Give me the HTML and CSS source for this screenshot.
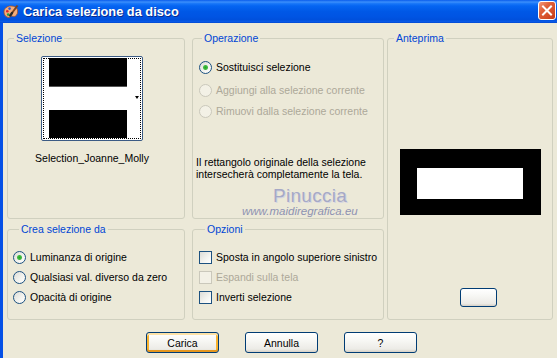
FILE: index.html
```html
<!DOCTYPE html>
<html lang="it">
<head>
    <meta charset="UTF-8">
    <title>Carica selezione da disco</title>
    <link rel="stylesheet" href="styles.css">
</head>
<body>
    <div class="window">
        <header class="titlebar">
            <svg class="app-icon" width="16" height="16" viewBox="0 0 16 16">
                <path d="M8 2C4 2 1 4.5 1 8c0 3 2 5.5 5 5.5 1.5 0 1.5-1.5 2.5-1.5S11 13 12.5 12 15 9 14.5 6 11 2 8 2z" fill="#f3ad7c" stroke="#a0522d" stroke-width=".8"/>
                <circle cx="4.3" cy="7.2" r="1.3" fill="#e02828"/>
                <circle cx="6.6" cy="4.6" r="1.3" fill="#2858e0"/>
                <circle cx="5.2" cy="10.6" r="1.3" fill="#22a040"/>
                <path d="M14.5 1.5 L9 9" stroke="#7a4420" stroke-width="2"/>
                <path d="M9 9 L7.2 11.6" stroke="#2a2a2a" stroke-width="2.4" stroke-linecap="round"/>
            </svg>
            <span class="title">Carica selezione da disco</span>
            <button class="close" aria-label="Chiudi">
                <svg width="16" height="17" viewBox="0 0 16 17">
                    <path d="M4 4.5 L12 12.5 M12 4.5 L4 12.5" stroke="#fff" stroke-width="2" stroke-linecap="square"/>
                </svg>
            </button>
        </header>

        <div class="client">
            <div class="groups">
                <fieldset class="group group-sel">
                    <legend>Selezione</legend>
                    <div class="sel-picker">
                        <div class="thumb">
                            <div class="thumb-focus">
                                <div class="thumb-img">
                                    <i class="band band-top"></i>
                                    <i class="band band-mid"></i>
                                    <i class="band band-bottom"></i>
                                </div>
                                <span class="thumb-arrow"></span>
                            </div>
                        </div>
                        <div class="sel-name">Selection_Joanne_Molly</div>
                    </div>
                </fieldset>

                <fieldset class="group group-op">
                    <legend>Operazione</legend>
                    <label class="option"><input type="radio" name="op" checked><span>Sostituisci selezione</span></label>
                    <label class="option disabled"><input type="radio" name="op" disabled><span>Aggiungi alla selezione corrente</span></label>
                    <label class="option disabled"><input type="radio" name="op" disabled><span>Rimuovi dalla selezione corrente</span></label>
                    <p class="note">Il rettangolo originale della selezione<br>intersecherà completamente la tela.</p>
                    <div class="watermark">
                        <div class="watermark-name">Pinuccia</div>
                        <div class="watermark-url">www.maidiregrafica.eu</div>
                    </div>
                </fieldset>

                <fieldset class="group group-prev">
                    <legend>Anteprima</legend>
                    <div class="preview">
                        <div class="preview-sel"></div>
                    </div>
                    <button class="btn btn-small" aria-label="Anteprima"></button>
                </fieldset>

                <fieldset class="group group-crea">
                    <legend>Crea selezione da</legend>
                    <label class="option"><input type="radio" name="src" checked><span>Luminanza di origine</span></label>
                    <label class="option"><input type="radio" name="src"><span>Qualsiasi val. diverso da zero</span></label>
                    <label class="option"><input type="radio" name="src"><span>Opacità di origine</span></label>
                </fieldset>

                <fieldset class="group group-opt">
                    <legend>Opzioni</legend>
                    <label class="option"><input type="checkbox"><span>Sposta in angolo superiore sinistro</span></label>
                    <label class="option disabled"><input type="checkbox" disabled><span>Espandi sulla tela</span></label>
                    <label class="option"><input type="checkbox"><span>Inverti selezione</span></label>
                </fieldset>
            </div>

            <div class="actions">
                <button class="btn btn-default">Carica</button>
                <button class="btn">Annulla</button>
                <button class="btn">?</button>
            </div>
        </div>
    </div>
</body>
</html>
```

FILE: styles.css
```css
body {
    margin: 0;
    font-family: "Liberation Sans", Arial, sans-serif;
    font-size: 10.5px;
    color: #000;
    background: #ece9d8;
}
.window {
    width: 557px;
    height: 358px;
    overflow: hidden;
}

/* title bar */
.titlebar {
    height: 23px;
    display: flex;
    align-items: center;
    background: linear-gradient(to bottom, #0a5cec 0%, #3b8ffb 9%, #1775f8 16%, #0565f2 26%, #0058e6 50%, #0054e3 72%, #0050dc 86%, #0a5ae8 95%, #0046cc 100%);
}
.app-icon {
    margin-left: 3px;
    flex: none;
}
.title {
    margin-left: 4px;
    color: #fff;
    font-weight: bold;
    font-size: 12.8px;
    text-shadow: 1px 1px #0a2a8c;
}
.close {
    margin-left: auto;
    margin-right: 1px;
    align-self: flex-start;
    margin-top: 1px;
    width: 18px;
    height: 19px;
    padding: 0;
    border: 1px solid #fff;
    border-radius: 3px;
    background: linear-gradient(135deg, #f39a7c 0%, #e0623c 35%, #d44e28 70%, #c23c1a 100%);
    display: flex;
    align-items: center;
    justify-content: center;
}

/* client area */
.client {
    height: 335px;
    border-left: 3px solid #0550e6;
    background: #ece9d8;
}
.groups {
    padding: 9px 0 0 4px;
    display: grid;
    grid-template-columns: 178px 7px 192px 3px 166px;
    grid-template-rows: 187px 4px 97px;
    grid-template-areas:
        "sel . op . prev"
        ". . . . prev"
        "crea . opt . prev";
}
.group {
    margin: 0;
    padding: 0;
    min-width: 0;
    border: 1px solid #d0d0bf;
    border-radius: 3px;
}
.group legend {
    margin-left: 6px;
    padding: 0 2px;
    line-height: 13px;
    color: #0046d5;
}
.group-sel { grid-area: sel; }
.group-op { grid-area: op; padding: 16px 0 0 3px; }
.group-prev { grid-area: prev; display: flex; flex-direction: column; align-items: center; }
.group-crea { grid-area: crea; padding: 15px 0 0 5px; }
.group-opt { grid-area: opt; padding: 15px 0 0 6px; }

/* selection picker */
.sel-picker {
    width: 102px;
    margin: 11px 0 0 33px;
    display: flex;
    flex-direction: column;
    align-items: center;
}
.thumb {
    width: 102px;
    height: 85px;
    box-sizing: border-box;
    border: 1px solid #3c5b84;
    border-radius: 2px;
    background: #fff;
    padding: 1px;
}
.thumb-focus {
    height: 100%;
    box-sizing: border-box;
    border: 1px dotted #000;
    display: flex;
    align-items: center;
    padding-left: 5px;
}
.thumb-img {
    width: 78px;
    height: 80px;
    margin-top: -1px;
    display: flex;
    flex-direction: column;
}
.band { display: block; }
.band-top { height: 29px; background: #000; box-shadow: inset 0 -1px #555; }
.band-mid { height: 23px; background: #fff; }
.band-bottom { height: 28px; background: #000; }
.thumb-arrow {
    margin: -3px 0 0 8px;
    border-left: 2px solid transparent;
    border-right: 2px solid transparent;
    border-top: 3px solid #000;
}
.sel-name {
    margin-top: 11px;
    line-height: 13px;
    white-space: nowrap;
}

/* radio buttons and checkboxes */
.option {
    display: flex;
    align-items: center;
    gap: 4px;
    height: 13px;
    line-height: 13px;
    white-space: nowrap;
}
.option + .option { margin-top: 7px; }
.group-op .option { padding-left: 3px; }
.group-op .option:nth-of-type(2) { margin-top: 10px; }
.group-op .option:nth-of-type(3) { margin-top: 8px; }
.option.disabled { color: #aca899; }
.option input {
    appearance: none;
    margin: 0;
    width: 13px;
    height: 13px;
    flex: none;
    box-sizing: border-box;
    border: 1px solid #1c5180;
    background: linear-gradient(135deg, #dcdcd7 0%, #f4f4f0 60%, #fff 100%);
}
.option input[type="radio"] { border-radius: 50%; }
.option input[type="radio"]:checked {
    background: radial-gradient(circle, #23a623 0, #44bb44 2px, transparent 3px), linear-gradient(135deg, #dcdcd7 0%, #f4f4f0 60%, #fff 100%);
}
.option input:disabled {
    border-color: #cac8bb;
    background: #f3f1e6;
}

.note {
    margin: 38px 0 0;
    line-height: 12px;
}
.watermark {
    margin-top: 6px;
    padding-left: 46px;
}
.watermark-name {
    padding-left: 31px;
    font-size: 19px;
    line-height: 19px;
    color: #a6a9c6;
    text-shadow: 1px 1px #d6d6e2;
    letter-spacing: 0.3px;
}
.watermark-url {
    font-size: 11.5px;
    line-height: 12px;
    font-style: italic;
    color: #8e92b2;
}

/* preview */
.preview {
    margin-top: 104px;
    background: #000;
    padding: 19px 18px 16px 17px;
}
.preview-sel {
    width: 106px;
    height: 31px;
    background: #fff;
}

/* buttons */
.btn {
    width: 73px;
    height: 21px;
    padding: 0;
    font-family: inherit;
    font-size: 10.5px;
    color: #000;
    border: 1px solid #003c74;
    border-radius: 3px;
    background: linear-gradient(to bottom, #fff 0%, #f7f7f4 40%, #ecebe6 85%, #d6d0c5 100%);
}
.btn-default {
    box-shadow: inset 0 -2px 0 #e5971f, inset 0 2px 0 #fde2a7, inset 2px 0 0 #f8b330, inset -2px 0 0 #f8b330;
}
.btn-small {
    width: 37px;
    height: 19px;
    margin: 73px 0 0 17px;
}
.actions {
    margin-top: 12px;
    padding-left: 143px;
    display: flex;
    gap: 26px;
}
```
